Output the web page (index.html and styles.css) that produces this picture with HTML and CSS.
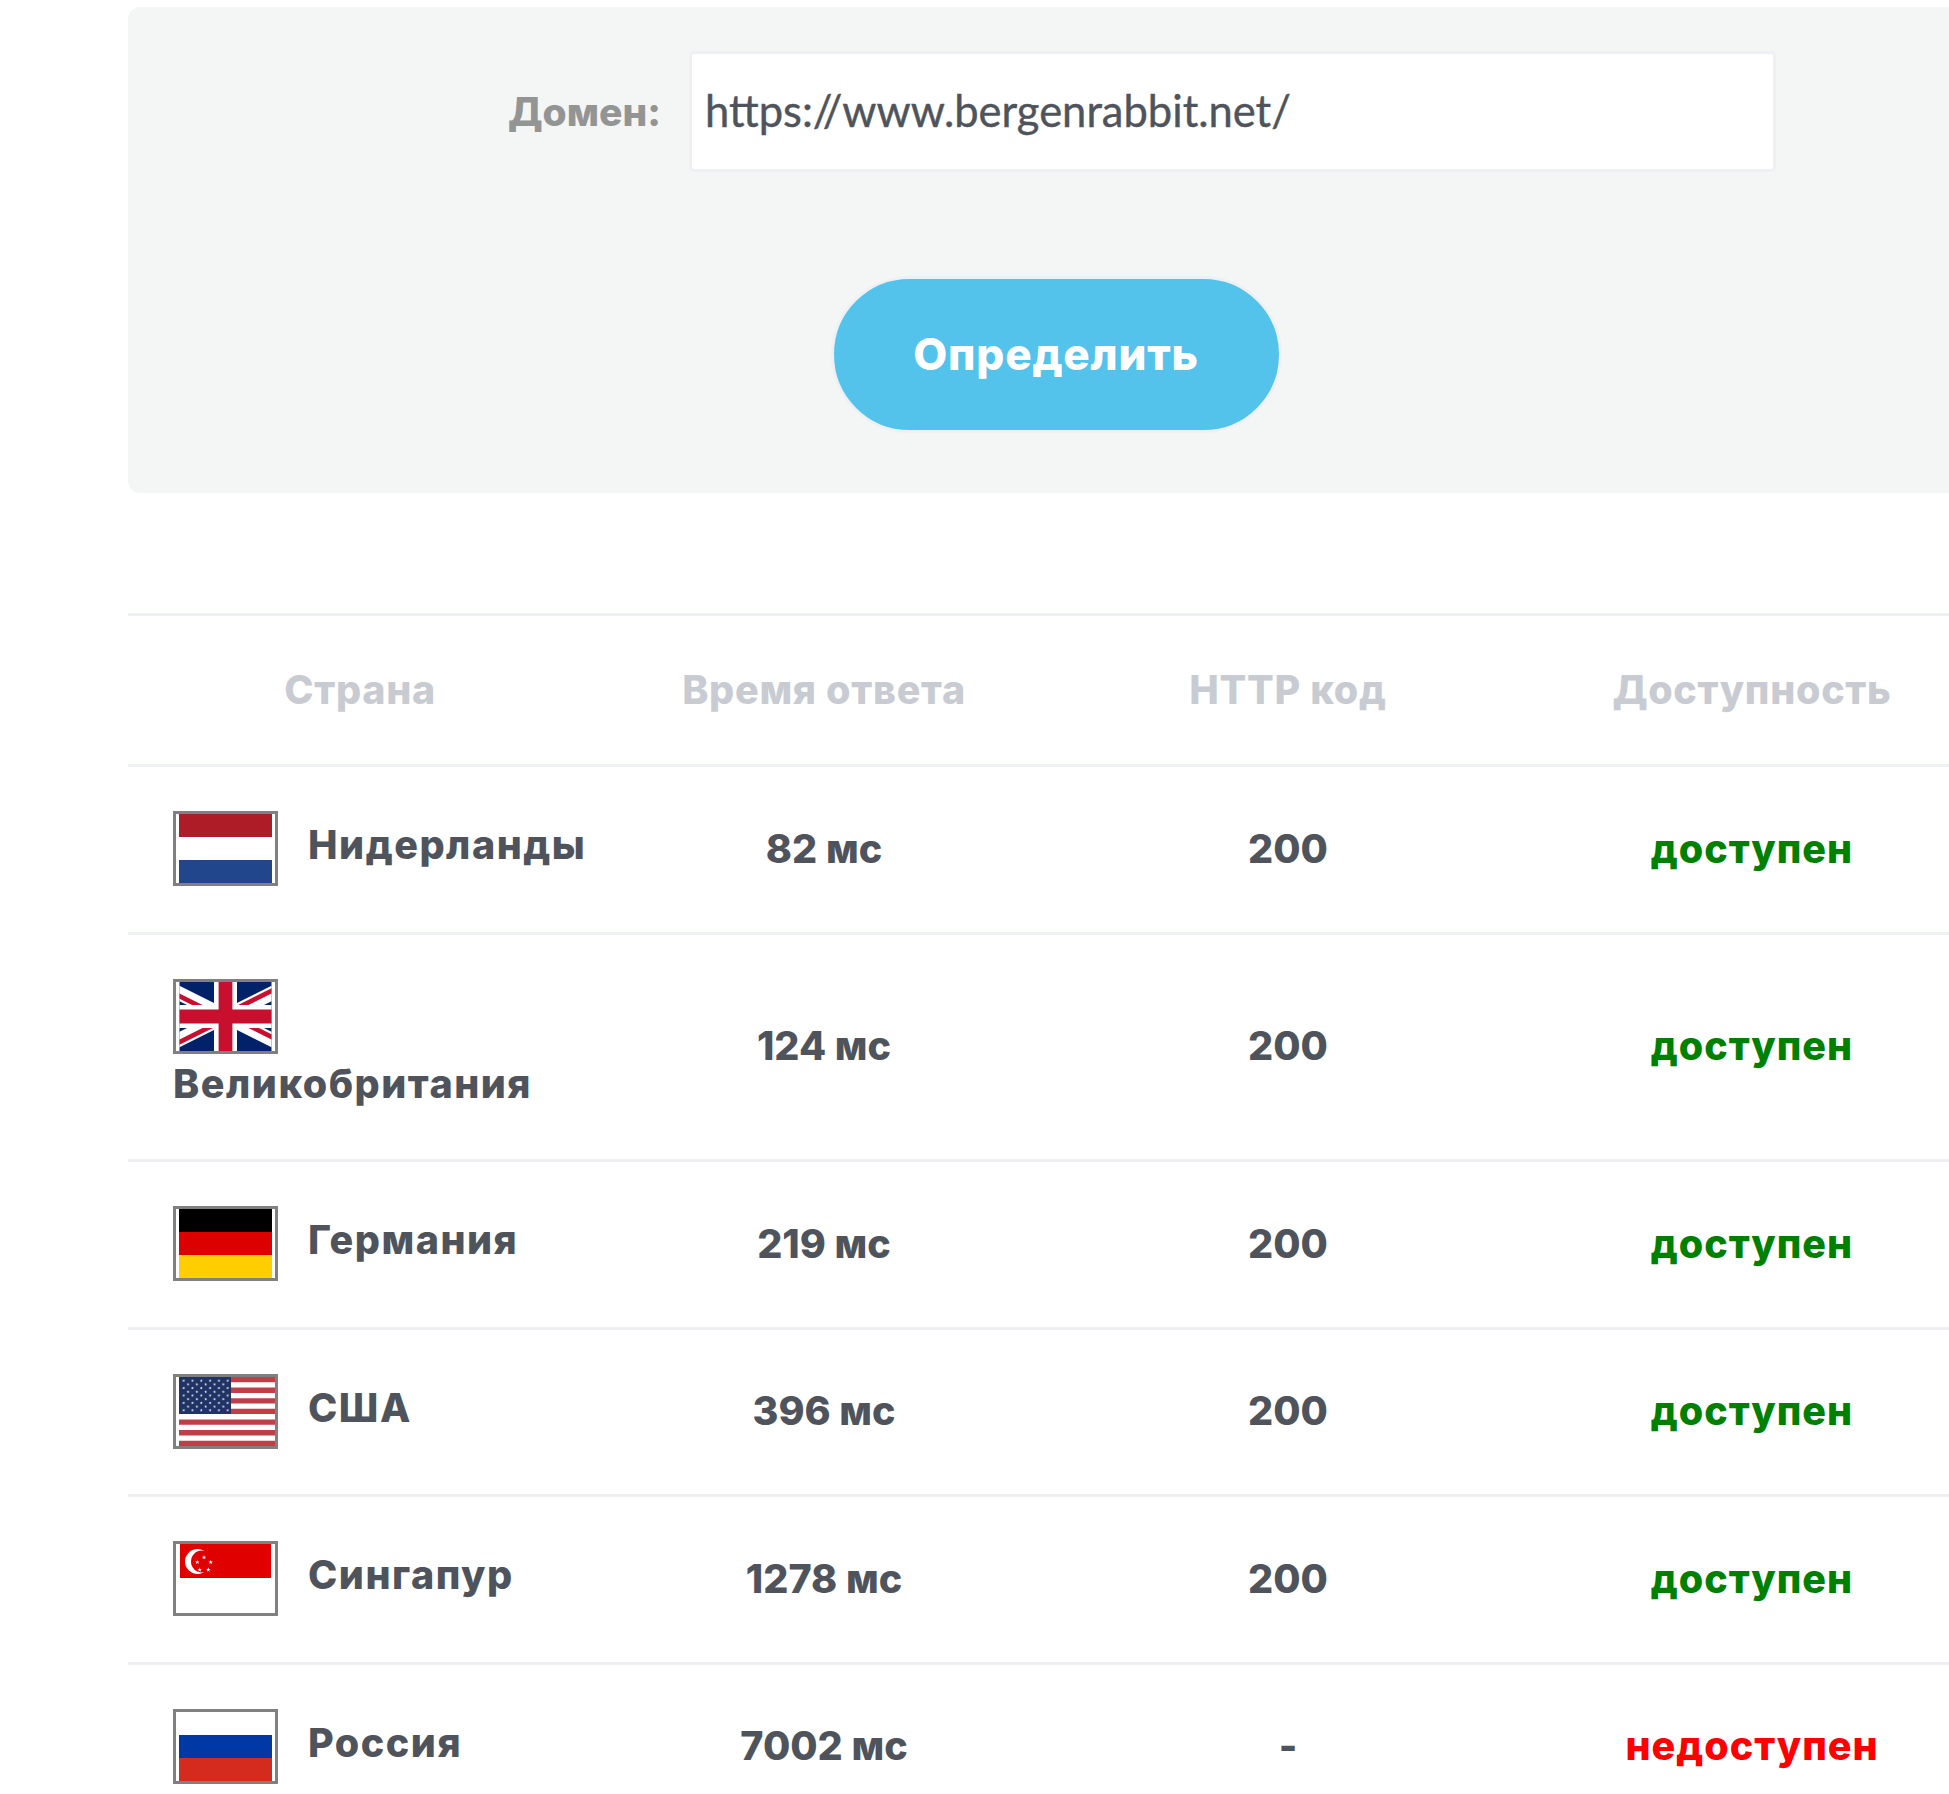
FILE: index.html
```html
<!DOCTYPE html>
<html lang="ru">
<head>
  <meta charset="UTF-8">
  <title>Проверка доступности сайта</title>
  <link rel="stylesheet" href="styles.css">
</head>
<body>
  <div class="page">
    <form class="check-form">
      <div class="form-row">
        <label class="form-label" for="domain">Домен:</label>
        <input class="form-input" id="domain" type="text" value="https://www.bergenrabbit.net/">
      </div>
      <button class="submit-button" type="button">Определить</button>
    </form>

    <table class="results">
      <thead>
        <tr>
          <th>Страна</th>
          <th>Время ответа</th>
          <th>HTTP код</th>
          <th>Доступность</th>
        </tr>
      </thead>
      <tbody>
        <tr>
          <td class="country">
            <svg class="flag" viewBox="0 0 99 69">
              <rect x="3" width="93" height="23" fill="#ae1c28"/>
              <rect x="3" y="46" width="93" height="23" fill="#21468b"/>
            </svg>Нидерланды
          </td>
          <td>82 мс</td>
          <td>200</td>
          <td class="status-up">доступен</td>
        </tr>
        <tr>
          <td class="country">
            <svg class="flag" viewBox="0 0 99 69">
              <!-- 2:1 flag cropped to 4:3, like the original picture -->
              <svg x="3.5" width="92" height="69" viewBox="10 0 40 30">
                <clipPath id="gb-red"><path d="M30 15h30v15zv15H0zH0V0zV0h30z"/></clipPath>
                <path fill="#012169" d="M0 0h60v30H0z"/>
                <path stroke="#fff" stroke-width="6" d="M0 0l60 30M60 0L0 30"/>
                <path stroke="#c8102e" stroke-width="4" clip-path="url(#gb-red)" d="M0 0l60 30M60 0L0 30"/>
                <path stroke="#fff" stroke-width="10" d="M30 0v30M0 15h60"/>
                <path stroke="#c8102e" stroke-width="6" d="M30 0v30M0 15h60"/>
              </svg>
            </svg>Великобритания
          </td>
          <td>124 мс</td>
          <td>200</td>
          <td class="status-up">доступен</td>
        </tr>
        <tr>
          <td class="country">
            <svg class="flag" viewBox="0 0 99 69">
              <rect x="3" width="93" height="23" fill="#000"/>
              <rect x="3" y="23" width="93" height="23" fill="#d00"/>
              <rect x="3" y="46" width="93" height="23" fill="#ffce00"/>
            </svg>Германия
          </td>
          <td>219 мс</td>
          <td>200</td>
          <td class="status-up">доступен</td>
        </tr>
        <tr>
          <td class="country">
            <svg class="flag" viewBox="0 0 99 69">
              <defs>
                <pattern id="us-stars" patternUnits="userSpaceOnUse" x="5.5" y="1.85" width="8.8" height="7.4">
                  <path fill="#fff" d="M2.2.5l.4 1h1l-.8.6.3 1-.9-.6-.9.6.3-1-.8-.6h1zM6.6 4.2l.4 1h1l-.8.6.3 1-.9-.6-.9.6.3-1-.8-.6h1z"/>
                </pattern>
              </defs>
              <path fill="#bf3e47" d="M3 0h96v5.3H3zM3 10.6h96v5.3H3zM3 21.2h96v5.3H3zM3 31.8h96v5.3H3zM3 42.5h96v5.3H3zM3 53.1h96v5.3H3zM3 63.7h96V69H3z"/>
              <rect x="3" width="52" height="37" fill="#1f3364"/>
              <rect x="5.5" y="1.85" width="48" height="33.5" fill="url(#us-stars)"/>
            </svg>США
          </td>
          <td>396 мс</td>
          <td>200</td>
          <td class="status-up">доступен</td>
        </tr>
        <tr>
          <td class="country">
            <svg class="flag" viewBox="0 0 99 69">
              <rect x="4" width="91" height="34" fill="#e00000"/>
              <circle cx="21.5" cy="17.5" r="12.5" fill="#fff"/>
              <circle cx="26" cy="17.5" r="11" fill="#e00000"/>
              <g fill="#fff">
                <path id="sg-star" d="M28 11.2l.6 1.5h1.6l-1.3 1 .5 1.6-1.4-1-1.4 1 .5-1.6-1.3-1h1.6z"/>
                <use href="#sg-star" x="6.7" y="4.7"/>
                <use href="#sg-star" x="4.3" y="12.4"/>
                <use href="#sg-star" x="-4.3" y="12.4"/>
                <use href="#sg-star" x="-6.7" y="4.7"/>
              </g>
            </svg>Сингапур
          </td>
          <td>1278 мс</td>
          <td>200</td>
          <td class="status-up">доступен</td>
        </tr>
        <tr>
          <td class="country">
            <svg class="flag" viewBox="0 0 99 69">
              <rect x="3" y="23" width="93" height="23" fill="#0039a6"/>
              <rect x="3" y="46" width="93" height="23" fill="#d52b1e"/>
            </svg>Россия
          </td>
          <td>7002 мс</td>
          <td>-</td>
          <td class="status-down">недоступен</td>
        </tr>
      </tbody>
    </table>
  </div>
</body>
</html>
```

FILE: styles.css
```css
* {
  margin: 0;
  padding: 0;
  box-sizing: border-box;
}

html, body {
  height: 100%;
  overflow: hidden;
}

body {
  font-family: 'Inter', 'Open Sans', sans-serif;
  background: #fff;
  color: #4f545c;
}

.page {
  width: 1856px;
  margin-left: 128px;
  padding-top: 7px;
}

.check-form {
  background: #f4f6f6;
  border-radius: 12px;
  padding: 44px 0 60px;
  display: flex;
  flex-direction: column;
  align-items: center;
  gap: 104px;
}

.form-row {
  width: 100%;
  display: flex;
  align-items: center;
  justify-content: flex-end;
  gap: 28px;
  padding-right: 208px;
}

.form-label {
  font-size: 39px;
  font-weight: 800;
  color: #939595;
}

.form-input {
  width: 1087px;
  height: 121px;
  background: #fff;
  border: 3px solid #eff0f3;
  border-radius: 5px;
  padding: 0 13px 3px;
  font-family: 'Lato', sans-serif;
  font-size: 43.5px;
  color: #4f545c;
  -webkit-text-stroke: 0.4px #4f545c;
  outline: none;
}

.submit-button {
  width: 451px;
  height: 157px;
  padding-bottom: 2px;
  background: #54c3ec;
  border: 3px solid #eff0f3;
  border-radius: 79px;
  font-family: 'Inter', sans-serif;
  font-size: 44px;
  font-weight: 800;
  letter-spacing: 0.8px;
  color: #fff;
  cursor: pointer;
}

.results {
  width: 100%;
  margin-top: 120px;
  border-collapse: collapse;
  table-layout: fixed;
  border-top: 3px solid #eff0f3;
}

.results tr {
  border-bottom: 3px solid #eff0f3;
}

.results th {
  padding: 46px 0;
  font-size: 39.5px;
  line-height: 56px;
  font-weight: 800;
  letter-spacing: 0.7px;
  color: #c8ccd2;
  text-align: center;
}

.results td {
  padding: 44px 0 45.5px;
  font-size: 39.5px;
  line-height: 60px;
  font-weight: 800;
  text-align: center;
}

.results td.country {
  padding-left: 45px;
  letter-spacing: 1.5px;
  text-align: left;
}

.flag {
  display: inline-block;
  width: 105px;
  height: 75px;
  margin-right: 30px;
  border: 3px solid #808080;
  vertical-align: middle;
}

.results td.status-up {
  color: #008000;
  letter-spacing: 1px;
}

.results td.status-down {
  color: #f00;
  letter-spacing: 1px;
}
```
